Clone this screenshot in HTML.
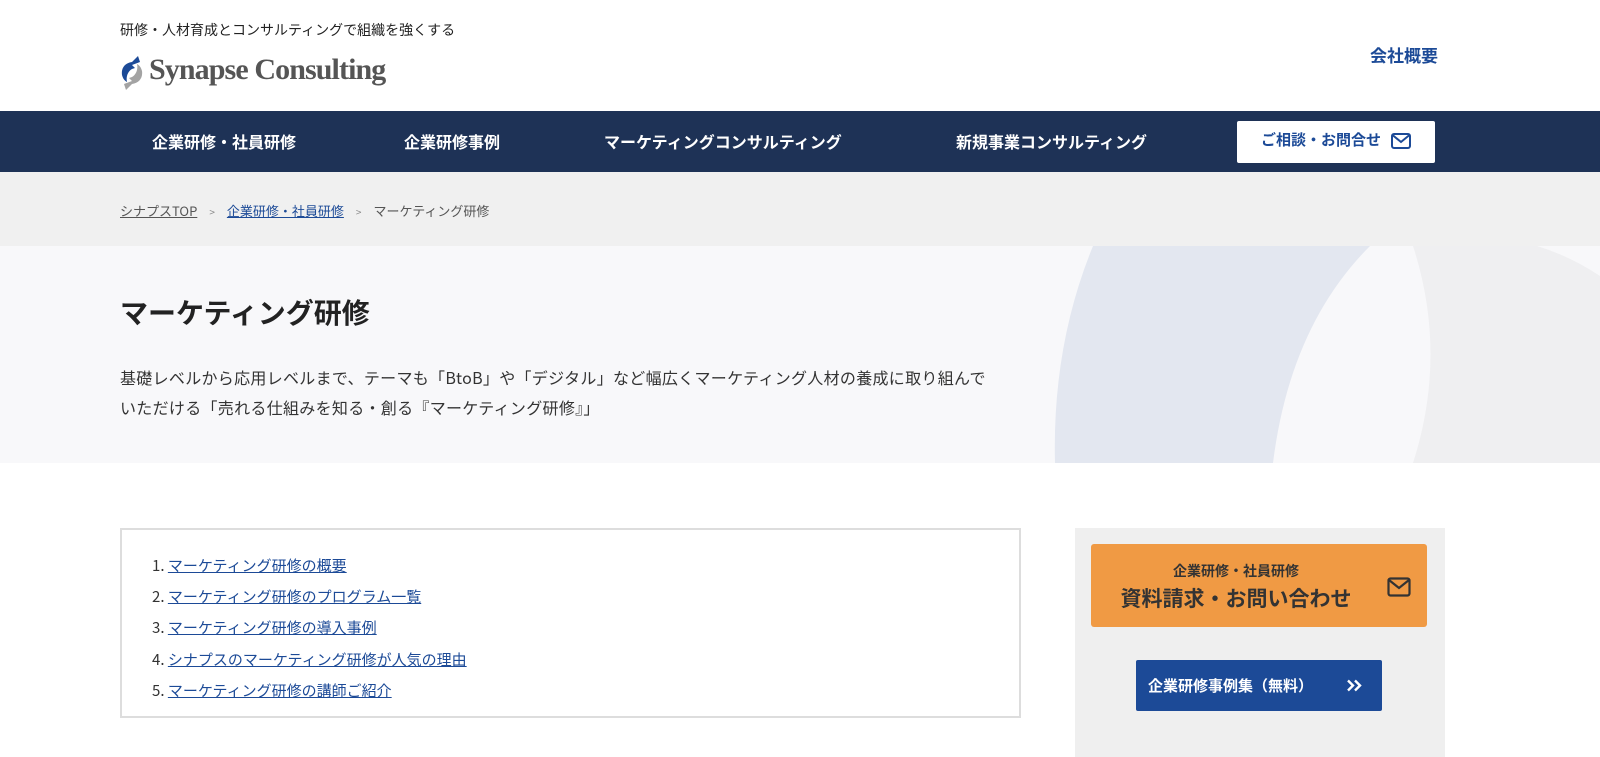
<!DOCTYPE html>
<html><head><meta charset="utf-8"><style>
*{margin:0;padding:0;box-sizing:border-box}
body{width:1600px;height:757px;overflow:hidden;background:#fff;font-family:"Noto Sans CJK JP","Liberation Sans",sans-serif;color:#333;position:relative}
.abs{position:absolute}
a{color:#1c4a97}
</style></head><body>
<div class="abs" style="left:120px;top:20px;font-size:14px;color:#222">研修・人材育成とコンサルティングで組織を強くする</div>
<svg class="abs" style="left:117px;top:54px" width="30" height="38" viewBox="0 0 28 38">
<path d="M20 2 L14 8 C7 9 3 14 4 21 C5 25 7 27 9 28 C8 24 9 18 14 15 L17 14 L14 11 L22 8 Z" fill="#1c4a97"/>
<path d="M8 36 L14 30 C21 29 25 24 24 17 C23 13 21 11 19 10 C20 14 19 20 14 23 L11 24 L14 27 L6 30 Z" fill="#a3a3a3"/>
</svg>
<div class="abs" style="left:149px;top:53px;font-family:'Liberation Serif',serif;font-weight:bold;font-size:30px;color:#555;letter-spacing:-0.9px">Synapse Consulting</div>
<div class="abs" style="left:1370px;top:42px;font-size:17px;font-weight:bold;color:#1c4a97">会社概要</div>
<div class="abs" style="left:0;top:111px;width:1600px;height:61px;background:#1e3256"></div>
<div class="abs" style="left:152px;top:129px;font-size:16px;color:#fff;font-weight:bold">企業研修・社員研修</div>
<div class="abs" style="left:404px;top:129px;font-size:16px;color:#fff;font-weight:bold">企業研修事例</div>
<div class="abs" style="left:604px;top:129px;font-size:16px;color:#fff;font-weight:bold">マーケティングコンサルティング</div>
<div class="abs" style="left:956px;top:129px;font-size:16px;color:#fff;font-weight:bold">新規事業コンサルティング</div>
<div class="abs" style="left:1237px;top:121px;width:198px;height:42px;background:#fff;border-radius:2px;font-size:15px;font-weight:bold;color:#1c4a97;padding:8px 0 0 24px">ご相談・お問合せ
<svg style="position:absolute;left:154px;top:12px" width="20" height="16" viewBox="0 0 20 16"><rect x="1" y="1" width="18" height="14" rx="2" fill="none" stroke="#1c4a97" stroke-width="2"/><path d="M1.5 2 L10 9 L18.5 2" fill="none" stroke="#1c4a97" stroke-width="2"/></svg></div>
<div class="abs" style="left:0;top:172px;width:1600px;height:74px;background:#f0f0f0"></div>
<div class="abs" style="left:120px;top:201px;font-size:13px;color:#555;white-space:nowrap"><span style="text-decoration:underline">シナプスTOP</span><span style="font-size:10px;margin:0 12px;color:#888">&gt;</span><a style="text-decoration:underline">企業研修・社員研修</a><span style="font-size:10px;margin:0 12px;color:#888">&gt;</span>マーケティング研修</div>
<div class="abs" style="left:0;top:246px;width:1600px;height:217px;background:#f8f8fa;overflow:hidden">
<svg width="1600" height="217" style="position:absolute;left:0;top:0">
<path d="M1413 0 Q1448 108 1413 217 L1600 217 L1600 0 Z" fill="#efeff1"/>
<path d="M1537 0 Q1570 10 1600 30 L1600 0 Z" fill="#f8f8fa"/>
<path d="M1093 0 Q1052 100 1055 217 L1273 217 Q1290 80 1370 0 Z" fill="#e3e7f0"/>
</svg></div>
<div class="abs" style="left:120px;top:292px;font-size:28px;font-weight:bold;color:#222">マーケティング研修</div>
<div class="abs" style="left:120px;top:362px;width:880px;font-size:16px;line-height:30px;color:#333;letter-spacing:0.3px">基礎レベルから応用レベルまで、テーマも「BtoB」や「デジタル」など幅広くマーケティング人材の養成に取り組んでいただける「売れる仕組みを知る・創る『マーケティング研修』」</div>
<div class="abs" style="left:120px;top:528px;width:901px;height:190px;border:2px solid #ddd"></div>
<div class="abs" style="left:152px;top:550px;font-size:15px;line-height:31.2px;color:#333">
<div>1. <a style="text-decoration:underline">マーケティング研修の概要</a></div>
<div>2. <a style="text-decoration:underline">マーケティング研修のプログラム一覧</a></div>
<div>3. <a style="text-decoration:underline">マーケティング研修の導入事例</a></div>
<div>4. <a style="text-decoration:underline">シナプスのマーケティング研修が人気の理由</a></div>
<div>5. <a style="text-decoration:underline">マーケティング研修の講師ご紹介</a></div>
</div>
<div class="abs" style="left:1075px;top:528px;width:370px;height:229px;background:#efefef"></div>
<div class="abs" style="left:1091px;top:544px;width:336px;height:83px;background:#f09a44;border-radius:3px"></div>
<div class="abs" style="left:1101px;top:561px;width:270px;text-align:center;font-size:14px;font-weight:bold;color:#333">企業研修・社員研修</div>
<div class="abs" style="left:1101px;top:583px;width:270px;text-align:center;font-size:21px;font-weight:bold;color:#333">資料請求・お問い合わせ</div>
<svg class="abs" style="left:1387px;top:577px" width="24" height="20" viewBox="0 0 24 20"><rect x="1.5" y="1.5" width="21" height="17" rx="2" fill="none" stroke="#333" stroke-width="2.2"/><path d="M2 3 L12 11 L22 3" fill="none" stroke="#333" stroke-width="2.2"/></svg>
<div class="abs" style="left:1136px;top:660px;width:246px;height:51px;background:#1c4a97;border-radius:2px;color:#fff;font-size:15px;font-weight:bold;padding:15px 0 0 12px">企業研修事例集（無料）
<svg style="position:absolute;left:210px;top:19px" width="16" height="13" viewBox="0 0 16 13"><path d="M2 1.5 L7 6.5 L2 11.5 M9 1.5 L14 6.5 L9 11.5" fill="none" stroke="#fff" stroke-width="2.4"/></svg></div>
</body></html>
